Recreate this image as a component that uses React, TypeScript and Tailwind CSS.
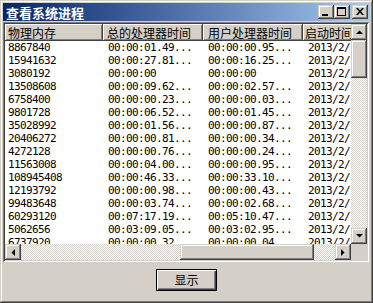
import React from "react";

const rows: [string, string, string][] = [
  ["8867840", "00:00:01.49...", "00:00:00.95..."],
  ["15941632", "00:00:27.81...", "00:00:16.25..."],
  ["3080192", "00:00:00", "00:00:00"],
  ["13508608", "00:00:09.62...", "00:00:02.57..."],
  ["6758400", "00:00:00.23...", "00:00:00.03..."],
  ["9801728", "00:00:06.52...", "00:00:01.45..."],
  ["35028992", "00:00:01.56...", "00:00:00.87..."],
  ["20406272", "00:00:00.81...", "00:00:00.34..."],
  ["4272128", "00:00:00.76...", "00:00:00.24..."],
  ["11563008", "00:00:04.00...", "00:00:00.95..."],
  ["108945408", "00:00:46.33...", "00:00:33.10..."],
  ["12193792", "00:00:00.98...", "00:00:00.43..."],
  ["99483648", "00:00:03.74...", "00:00:02.68..."],
  ["60293120", "00:07:17.19...", "00:05:10.47..."],
  ["5062656", "00:03:09.05...", "00:03:02.95..."],
  ["6737920", "00:00:00.32...", "00:00:00.04..."],
];

const raised =
  "bg-[#d4d0c8] shadow-[inset_-1px_-1px_#404040,inset_1px_1px_#d4d0c8,inset_-2px_-2px_#808080,inset_2px_2px_#ffffff]";
const dither =
  "[background:repeating-conic-gradient(#d4d0c8_0_25%,#ffffff_0_50%)_0_0/2px_2px]";
const cjk = "[font-family:'Noto_Sans_CJK_SC','Noto_Sans',sans-serif]";
const mono = "[font-family:'DejaVu_Sans_Mono',monospace] text-[11px] tracking-[-0.62px]";

function Arrow({ dir }: { dir: "up" | "down" | "left" | "right" }) {
  const pts: Record<string, string> = {
    up: "0,4 7,4 3.5,0.5",
    down: "0,0 7,0 3.5,3.5",
    left: "4,0 4,7 0.5,3.5",
    right: "0,0 0,7 3.5,3.5",
  };
  const vertical = dir === "up" || dir === "down";
  return (
    <svg width={vertical ? 7 : 4} height={vertical ? 4 : 7} viewBox={vertical ? "0 0 7 4" : "0 0 4 7"}>
      <polygon points={pts[dir]} fill="#000" />
    </svg>
  );
}

function ScrollBtn({ dir }: { dir: "up" | "down" | "left" | "right" }) {
  return (
    <div className={`w-[16px] h-[16px] shrink-0 flex items-center justify-center ${raised}`}>
      <Arrow dir={dir} />
    </div>
  );
}

function CapBtn({ kind }: { kind: "min" | "max" | "close" }) {
  return (
    <div className={`w-[16px] h-[14px] relative ${raised}`}>
      {kind === "min" && <div className="absolute left-[4px] top-[9px] w-[6px] h-[2px] bg-black" />}
      {kind === "max" && (
        <div className="absolute left-[3px] top-[2px] w-[9px] h-[9px] border border-black border-t-2" />
      )}
      {kind === "close" && (
        <svg className="absolute left-[4px] top-[3px]" width="8" height="7" viewBox="0 0 8 7">
          <path d="M0 0h2l2 2.5L6 0h2L5 3.5L8 7H6L4 4.5L2 7H0l3-3.5z" fill="#000" />
        </svg>
      )}
    </div>
  );
}

function HeadCell({ w, pl, children }: { w: string; pl: string; children: React.ReactNode }) {
  return (
    <div
      className={`${w} ${pl} h-full shrink-0 flex items-center whitespace-nowrap overflow-hidden bg-[#d4d0c8] shadow-[inset_-1px_-1px_#404040,inset_1px_1px_#ffffff,inset_-2px_-2px_#808080]`}
    >
      {children}
    </div>
  );
}

export default function App() {
  return (
    <div
      className={`w-[373px] h-[303px] bg-[#d4d0c8] overflow-hidden p-[3px] flex flex-col text-black ${cjk} shadow-[inset_-1px_-1px_#404040,inset_1px_1px_#d4d0c8,inset_-2px_-2px_#808080,inset_2px_2px_#ffffff]`}
    >
      {/* title bar */}
      <div className="h-[18px] shrink-0 flex items-center bg-linear-to-r from-[#0a246a] to-[#a6caf0] pl-[3px] pr-[2px]">
        <span className="text-white font-bold text-[13px] leading-none flex-1">查看系统进程</span>
        <div className="flex">
          <CapBtn kind="min" />
          <CapBtn kind="max" />
        </div>
        <div className="ml-[2px]">
          <CapBtn kind="close" />
        </div>
      </div>

      {/* list view */}
      <div className="mt-[1px] w-[366px] h-[240px] shrink-0 p-[2px] shadow-[inset_1px_1px_#808080,inset_-1px_-1px_#ffffff,inset_2px_2px_#404040,inset_-2px_-2px_#d4d0c8] flex flex-col">
        <div className="h-[220px] flex">
          <div className="w-[346px] h-full bg-white overflow-hidden flex flex-col">
            <div className="h-[17px] shrink-0 flex text-[12px] leading-none">
              <HeadCell w="w-[98px]" pl="pl-[3px]">物理内存</HeadCell>
              <HeadCell w="w-[100px]" pl="pl-[4px]">总的处理器时间</HeadCell>
              <HeadCell w="w-[100px]" pl="pl-[5px]">用户处理器时间</HeadCell>
              <HeadCell w="w-[60px]" pl="pl-[2px]">启动时间</HeadCell>
            </div>
            {rows.map((r, i) => (
              <div key={i} className={`h-[13px] shrink-0 flex items-center whitespace-nowrap ${mono} leading-none`}>
                <div className="w-[98px] shrink-0 pl-[3px] overflow-hidden">{r[0]}</div>
                <div className="w-[100px] shrink-0 pl-[5px] overflow-hidden">{r[1]}</div>
                <div className="w-[100px] shrink-0 pl-[5px] overflow-hidden">{r[2]}</div>
                <div className="shrink-0 pl-[5px]">2013/2/</div>
              </div>
            ))}
          </div>
          <div className="w-[16px] h-full flex flex-col">
            <ScrollBtn dir="up" />
            <div className={`flex-1 flex flex-col ${dither}`}>
              <div className={`h-[38px] w-full ${raised}`} />
            </div>
            <ScrollBtn dir="down" />
          </div>
        </div>
        <div className="h-[16px] flex">
          <ScrollBtn dir="left" />
          <div className={`w-[159px] h-full ${dither}`} />
          <div className={`w-[134px] h-full ${raised}`} />
          <div className={`w-[21px] h-full ${dither}`} />
          <ScrollBtn dir="right" />
          <div className="w-[16px] h-full bg-[#d4d0c8]" />
        </div>
      </div>

      {/* button */}
      <div className="flex justify-center mt-[7px]">
        <div className="w-[61px] h-[22px] border border-black bg-[#d4d0c8] shadow-[inset_1px_1px_#ffffff,inset_-1px_-1px_#404040,inset_-2px_-2px_#808080] flex items-center justify-center text-[12px] leading-none">
          显示
        </div>
      </div>
    </div>
  );
}
